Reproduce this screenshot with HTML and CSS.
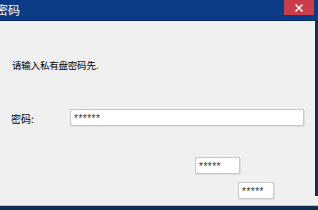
FILE: index.html
```html
<!DOCTYPE html>
<html>
<head>
<meta charset="utf-8">
<link rel="stylesheet" href="styles.css">
</head>
<body>
<div class="window">
  <div class="titlebar">
    <span class="title">密码</span>
    <div class="close"><svg width="10" height="10" viewBox="0 0 10 10"><path d="M1.5 1.5 L8.5 8.5 M8.5 1.5 L1.5 8.5" stroke="#fff" stroke-width="1.6"/></svg></div>
  </div>
  <div class="content">
    <div class="main">
      <div class="prompt">请输入私有盘密码先.</div>
      <div class="pwrow">
        <span class="label">密码:</span>
        <div class="field wide">******</div>
      </div>
      <div class="row1"><div class="field small1">*****</div></div>
      <div class="row2"><div class="field small2">*****</div></div>
    </div>
    <div class="edge"></div>
  </div>
  <div class="bottom"></div>
</div>
</body>
</html>
```

FILE: styles.css
```css
html, body {
  margin: 0;
  padding: 0;
  width: 318px;
  height: 210px;
  overflow: hidden;
  background: #f0f0f0;
}
.window {
  width: 318px;
  height: 210px;
  display: flex;
  flex-direction: column;
  font-family: "Noto Sans CJK SC", "Liberation Sans", sans-serif;
  color: #000;
}
.titlebar {
  height: 20px;
  flex: none;
  background: #0c3c85;
  border-bottom: 1px solid #082c66;
  display: flex;
  align-items: flex-start;
  justify-content: space-between;
  overflow: hidden;
}
.title {
  color: #fff;
  font-size: 12px;
  line-height: 18px;
  margin-left: -4px;
  margin-top: 1px;
}
.close {
  width: 30px;
  height: 15px;
  margin-right: 4px;
  background: #c93d4c;
  display: flex;
  align-items: center;
  justify-content: center;
}
.content {
  flex: 1;
  display: flex;
  min-height: 0;
}
.main {
  flex: 1;
  padding-left: 12px;
  padding-right: 11px;
}
.edge {
  width: 3px;
  height: 175px;
  background: #142f55;
}
.prompt {
  font-size: 9.5px;
  line-height: 14px;
  margin-top: 37px;
  letter-spacing: -0.2px;
}
.pwrow {
  display: flex;
  align-items: center;
  margin-top: 37px;
}
.label {
  font-size: 10px;
  width: 59px;
  margin-top: 2px;
  margin-left: -1px;
}
.field {
  box-sizing: border-box;
  height: 17px;
  background: #fff;
  border: 1px solid #c9c9c9;
  box-shadow: 1px 1px 0 #e0e0e0;
  font-family: "Liberation Sans", sans-serif;
  font-size: 10px;
  line-height: 17px;
  color: #333;
  padding-left: 3px;
  letter-spacing: 0.5px;
}
.wide {
  flex: 1;
}
.row1 {
  display: flex;
  margin-top: 31px;
  padding-left: 183px;
}
.small1 {
  width: 45px;
}
.row2 {
  display: flex;
  margin-top: 8px;
  padding-left: 226px;
}
.small2 {
  width: 36px;
}
.bottom {
  height: 4px;
  flex: none;
  background: #132b4c;
  border-top: 1px solid #a8c8e8;
}
```
